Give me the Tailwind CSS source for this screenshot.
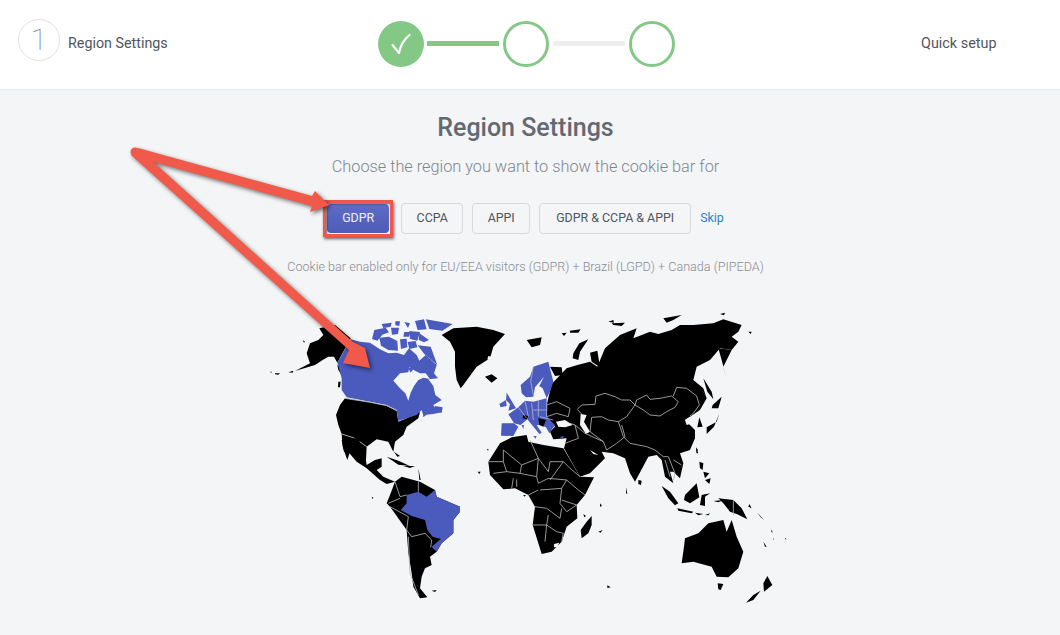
<!DOCTYPE html>
<html>
<head>
<meta charset="utf-8">
<script src="https://cdn.jsdelivr.net/npm/@tailwindcss/browser@4"></script>
</head>
<body class="m-0 overflow-hidden bg-[#f4f5f7] font-['Roboto',sans-serif]">
<div class="relative w-[1060px] h-[635px] overflow-hidden">
  <header class="h-[89px] bg-white shadow-[0_1px_2px_rgba(0,0,0,0.06)] flex items-center pl-[18px] pb-[2px]">
    <div class="w-[360px] flex items-center">
      <div class="-mt-[8px] w-[42px] h-[42px] rounded-full border border-[#e2e2e2] flex items-center justify-center text-[30px] font-thin text-[#7d828a]">1</div>
      <span class="ml-2 text-[14.3px] text-[#4f5661]">Region Settings</span>
    </div>
    <div class="flex items-center w-[297px]">
      <div class="w-[46px] h-[46px] rounded-full bg-[#84c886] flex items-center justify-center">
        <svg width="20" height="20" viewBox="0 0 20 20" fill="none" stroke="#fff" stroke-width="2.2" stroke-linecap="round" stroke-linejoin="round"><path d="M1.5 11 L8 19 Q10 8 18.5 1"/></svg>
      </div>
      <div class="ml-[3px] w-[72px] h-[5px] bg-[#84c886]"></div>
      <div class="ml-[4px] w-[46px] h-[46px] rounded-full border-[3px] border-[#84c886]"></div>
      <div class="ml-[4px] w-[72px] h-[5px] bg-[#eeeeee]"></div>
      <div class="ml-[4px] w-[46px] h-[46px] rounded-full border-[3px] border-[#84c886]"></div>
    </div>
    <span class="ml-[246px] text-[14.4px] text-[#4f5661]">Quick setup</span>
  </header>

  <main class="w-[1051px] flex flex-col items-center">
    <h1 class="mt-[22px] text-[25px] leading-[34px] font-medium text-[#626973]">Region Settings</h1>
    <p class="mt-[10px] text-[16.3px] leading-6 font-light text-[#80868f]">Choose the region you want to show the cookie bar for</p>
    <div class="mt-[24px] h-[31px] flex items-center text-[12.4px]">
      <button class="relative w-[62px] h-[29px] bg-gradient-to-b from-[#5f6cc4] to-[#4f5cb8] text-white/90 rounded-sm">GDPR<span class="absolute -inset-[4px] border-[3px] border-[#f0574a] shadow-[1px_2px_3px_rgba(0,0,0,0.6),inset_1px_1px_2px_rgba(0,0,0,0.6)]"></span></button>
      <button class="ml-[12px] w-[62px] h-[31px] border border-[#d5d8dc] rounded-sm text-[#50565f]">CCPA</button>
      <button class="ml-[9px] w-[58px] h-[31px] border border-[#d5d8dc] rounded-sm text-[#50565f]">APPI</button>
      <button class="ml-[9px] w-[152px] h-[31px] border border-[#d5d8dc] rounded-sm text-[#50565f]">GDPR &amp; CCPA &amp; APPI</button>
      <a class="ml-[9px] text-[#2b83c9]">Skip</a>
    </div>
    <p class="mt-[25px] text-[12.6px] leading-4 font-light text-[#888d94]">Cookie bar enabled only for EU/EEA visitors (GDPR) + Brazil (LGPD) + Canada (PIPEDA)</p>
  </main>

  <svg class="absolute left-0 top-0" width="1060" height="635" viewBox="0 0 1060 635">
    <!-- North America / Greenland -->
    <g transform="translate(260 310) scale(.33333)">
      <path fill="#000" d="M178 55L225 45L272 85L232 158L222 140L205 140L188 150L165 165L105 183L150 160L140 130L150 100L175 90L190 75Z"/>
      <path fill="#000" d="M232 165L248 175L245 195L235 180Z M235 215L242 215L240 232L234 232Z"/>
      <path fill="#000" d="M255 265L330 277L380 287L410 302L415 335L440 325L480 306L475 325L440 350L430 375L405 395L400 425L385 395L350 388L320 410L285 385L245 372L235 345L228 315L240 285Z"/>
      <path fill="#000" d="M245 372L285 385L320 410L318 450L290 450L270 425L262 450L248 410Z"/>
      <path fill="#4b5bbd" d="M272 88L300 95L330 98L360 118L385 130L410 128L432 135L447 115L470 135L478 152L497 135L530 165L522 190L534 205L505 208L520 228L526 255L545 270L520 285L530 300L548 306L520 312L490 315L485 300L470 315L440 325L415 333L410 300L380 285L330 275L260 262L245 240L245 205L232 158Z"/>
      <path fill="#f4f5f7" d="M400 212L420 190L445 187L448 172L465 182L480 190L497 190L510 207L490 203L475 210L462 228L452 248L445 272L436 250L420 235Z"/>
      <path fill="#4b5bbd" d="M365 42L395 38L392 50L370 54Z M406 34L420 34L418 48L406 46Z M433 36L450 40L444 54Z M465 33L492 28L500 58L473 60Z M498 28L578 42L547 62L508 57Z M343 60L377 53L387 67L367 74L352 92L336 87Z M393 53L417 53L414 72L396 74Z M433 66L450 66L447 80L430 80Z M448 63L480 66L472 92L450 87Z M478 70L507 90L492 97L476 90Z M358 83L387 80L412 93L414 122L385 120L363 107Z M420 88L440 86L442 112L423 117Z M443 96L467 93L472 112L448 117Z M473 106L512 110L532 165L493 132Z M445 175L465 172L452 188Z M480 178L500 180L495 188L480 186Z M525 288L548 292L545 308L525 303Z M488 300L505 310L490 322Z"/>
      <path fill="#000" d="M545 75L580 55L650 50L700 60L735 72L700 110L690 145L650 170L610 225L602 235L590 210L585 170L585 125L570 95Z"/>
      <path fill="#f4f5f7" d="M685 138L700 142L695 155L682 148Z"/>
      <path fill="#000" d="M675 200L695 193L712 205L695 218Z M128 90L135 95L132 98Z M30 185L35 185L34 189Z M45 190L60 190L55 194L45 193Z M85 187L100 182L98 188Z"/>
      <path fill="none" stroke="#b9b9b9" stroke-width="2.5" d="M255 265L330 277L380 287L410 302M245 372L285 385L320 410"/>
    </g>

    <!-- Eurasia / Europe -->
    <g transform="translate(490 310) scale(.33333)">
      <path fill="#000" d="M185 222L230 175L262 165L300 155L322 170L345 115L390 75L440 55L430 85L480 65L505 72L545 60L570 45L610 45L670 40L700 28L755 45L745 65L725 80L745 95L725 120L690 115L660 150L620 170L610 210L640 235L650 265L630 300L600 320L585 330L615 360L615 385L600 420L570 430L580 460L570 505L550 485L540 485L550 520L525 500L515 450L500 435L475 440L435 515L420 490L405 445L370 430L335 425L345 445L300 490L270 500L222 415L230 385L190 388L180 365L195 350L170 320L170 285Z"/>
      <path fill="#f4f5f7" d="M198 335L225 330L248 345L225 352L205 350Z M272 312L290 315L282 335L300 365L288 372L270 345Z M300 420L325 435L310 432Z M610 210L650 260L668 280L642 250Z M585 330L600 320L608 340L590 345Z"/>
      <path fill="#000" d="M180 170L215 172L218 195L195 198Z M250 130L268 100L295 88L270 125L265 150L248 145Z M300 128L322 122L330 172L305 155Z M355 35L370 30L372 38Z M365 40L405 38L395 48L370 45Z M520 25L575 15L550 30L530 38Z M215 70L230 68L222 78Z M240 62L272 58L265 68L240 68Z M110 90L155 82L150 105L125 112Z M690 12L705 8L702 16Z M775 65L785 65L782 72Z"/>
      <path fill="#000" d="M685 115L695 150L712 215L700 170L725 120Z M640 205L665 245L670 268L652 245Z M668 285L695 260L685 295L665 295Z M688 310L672 350L650 372L650 352L680 335Z M628 322L638 350L622 352Z M618 415L625 430L620 430Z"/>
      <path fill="#4b5bbd" d="M92 225L120 200L130 170L175 155L190 215L182 240L170 265L158 235L148 228L162 200L135 232L130 260L108 262L95 250Z"/>
      <path fill="#4b5bbd" d="M50 248L78 295L55 302L60 282L48 270Z M28 282L48 270L50 288L32 292Z"/>
      <path fill="#4b5bbd" d="M85 292L105 272L130 275L170 265L172 290L170 320L195 345L178 370L168 352L150 345L140 345L155 368L148 372L112 328L92 345L72 340L55 312L60 310Z"/>
      <path fill="#4b5bbd" d="M35 340L72 340L85 350L70 378L33 377Z"/>
      <path fill="#000" d="M100 315L115 318L110 328L98 325Z M145 325L168 330L160 350L148 345Z"/>
      <path fill="#4b5bbd" d="M95 345L102 345L100 358Z M130 378L140 378L136 386Z M210 380L222 378L215 388Z"/>
      <path fill="none" stroke="#c4c9d8" stroke-width="2" d="M130 170L122 215L130 255M170 268L170 320M105 272L115 320M125 280L130 330M85 292L110 325M145 270L145 320M170 300L130 300M150 320L190 330"/>
      <path fill="none" stroke="#b5b5b5" stroke-width="2.5" stroke-linejoin="round" d="M170 285L200 275L240 295L235 320L200 310L170 320M262 298L275 285L315 283L318 258L345 250L375 260L395 270L420 270L435 285L440 270L470 255L480 268L510 265L545 258L565 275L555 292L530 305L510 318L480 315L460 300L435 285M550 258L560 232L590 235L620 258L628 285L610 310L600 318M262 298L275 312M435 285L410 320L385 335L355 330L335 320L305 322L300 365L340 395L350 420L380 400L405 380L395 345M385 335L400 380L420 400L470 410L495 420L520 440L535 440M340 395L285 370L255 345L240 340M255 345L265 385L225 400"/>
    </g>

    <!-- South hemisphere -->
    <g transform="translate(340 440) scale(.33333)">
      <path fill="#000" d="M5 -5L20 30L50 65L80 85L120 120L140 132L165 125L130 110L110 90L125 80L125 55L105 60L80 75L75 45L55 -5Z M5 0L12 35L20 38L12 0Z"/>
      <path fill="#000" d="M140 50L175 62L210 78L175 74Z M190 78L225 78L210 84Z M95 172L100 172L98 178Z M162 35L180 48L172 50Z M235 85L242 120L238 120Z"/>
      <path fill="#000" d="M185 110L240 125L285 150L290 170L360 200L360 215L340 240L340 280L305 310L290 335L270 350L275 375L255 385L245 410L240 445L262 472L240 475L220 440L215 400L205 340L200 270L150 200L140 190L150 165L165 125Z"/>
      <path fill="#4b5bbd" d="M200 165L235 155L260 170L285 150L290 170L360 200L360 215L340 240L340 280L305 310L290 335L275 320L303 297L278 290L262 270L255 240L215 228L182 210L200 190Z"/>
      <path fill="none" stroke="#b5b5b5" stroke-width="2.5" d="M165 125L180 170L200 165M145 190L180 175M150 200L205 230L200 270M200 270L215 290L255 280L275 300L272 322M205 290L210 400L235 465M235 125L235 155"/>
      <path fill="#000" d="M445 65L480 10L515 -8L560 -15L565 5L610 15L670 25L720 110L762 112L735 165L710 195L712 235L680 260L665 305L635 335L605 342L595 310L578 255L585 200L565 165L525 145L490 148L450 105Z"/>
      <path fill="#f4f5f7" d="M642 312L658 308L652 322L642 322Z"/>
      <path fill="none" stroke="#b5b5b5" stroke-width="2.5" d="M490 30L545 75L595 55L570 0M445 65L490 65L490 30M595 55L625 95L630 65L670 65L690 85L720 110M490 65L500 95L460 100M500 95L540 100L545 75M540 100L590 110L595 55M590 110L595 130L625 115L680 120L715 150L735 165M600 150L665 145L660 190L680 215L710 195M565 165L595 150M585 200L620 205L660 235L665 205M578 255L620 255L625 225M620 255L615 305M620 255L650 275L670 280L665 305M520 115L515 145M530 118L530 140M680 120L665 145M670 65L630 120M710 195L665 180"/>
      <path fill="#000" d="M755 228L755 255L745 280L725 295L722 270L740 245Z M780 190L786 198L780 200Z M730 222L738 228L733 232Z M775 275L788 270L782 278Z M413 95L422 95L418 102Z M550 165L558 165L553 170Z M440 28L446 28L444 32Z"/>
      <path fill="#000" d="M1068 22L1074 30L1070 38Z M895 120L905 122L903 135L895 132Z M965 138L990 155L1015 190L1005 196L985 175Z M1012 205L1060 215L1055 220L1015 212Z M1065 218L1090 222L1075 226Z M1095 225L1110 220L1105 226Z M1035 165L1070 130L1078 172L1050 190L1032 180Z M1085 165L1110 160L1095 170L1095 198L1080 195Z M1078 65L1090 70L1088 90L1080 85Z M1090 95L1108 100L1095 115Z M1095 120L1112 115L1108 132Z M1120 183L1150 180L1135 187Z M1135 175L1180 180L1205 205L1222 238L1190 222L1170 215L1150 190Z M1228 192L1235 205L1225 200Z M1252 218L1272 240L1262 232Z M1270 305L1280 320L1275 320Z M1295 268L1298 278L1294 275Z M1335 293L1340 298L1336 298Z M1300 295L1302 298L1298 298Z M802 436L812 442L802 444Z M858 142L862 162L858 160Z M275 452L290 450L285 456Z"/>
      <path fill="none" stroke="#b5b5b5" stroke-width="2.5" d="M1180 180L1180 225"/>
      <path fill="#000" d="M1035 295L1075 280L1105 250L1150 240L1160 275L1175 240L1190 290L1210 335L1195 385L1165 412L1130 410L1115 380L1060 365L1025 370L1032 320Z M1133 430L1150 432L1142 450L1135 448Z M1282 408L1297 435L1272 455L1270 430Z M1262 452L1240 480L1218 488L1240 465Z"/>
      <path fill="none" stroke="#b5b5b5" stroke-width="2.5" d="M985 50L1005 100L1000 120M1000 60L1025 75M975 60L990 110"/>
    </g>

    <!-- Annotation arrows -->
    <g class="drop-shadow-[2px_2px_2px_rgba(0,0,0,0.55)]">
      <path fill="#f15a4b" d="M132 156L138 148L312 196L315 191L329 205L310 212L312 206Z"/>
      <path fill="#f15a4b" d="M131 155L139 149L353 342L365 348L370 368L343 363L349 350Z"/>
      <circle cx="135" cy="152" r="4.5" fill="#f15a4b"/>
    </g>
  </svg>
</div>
</body>
</html>
